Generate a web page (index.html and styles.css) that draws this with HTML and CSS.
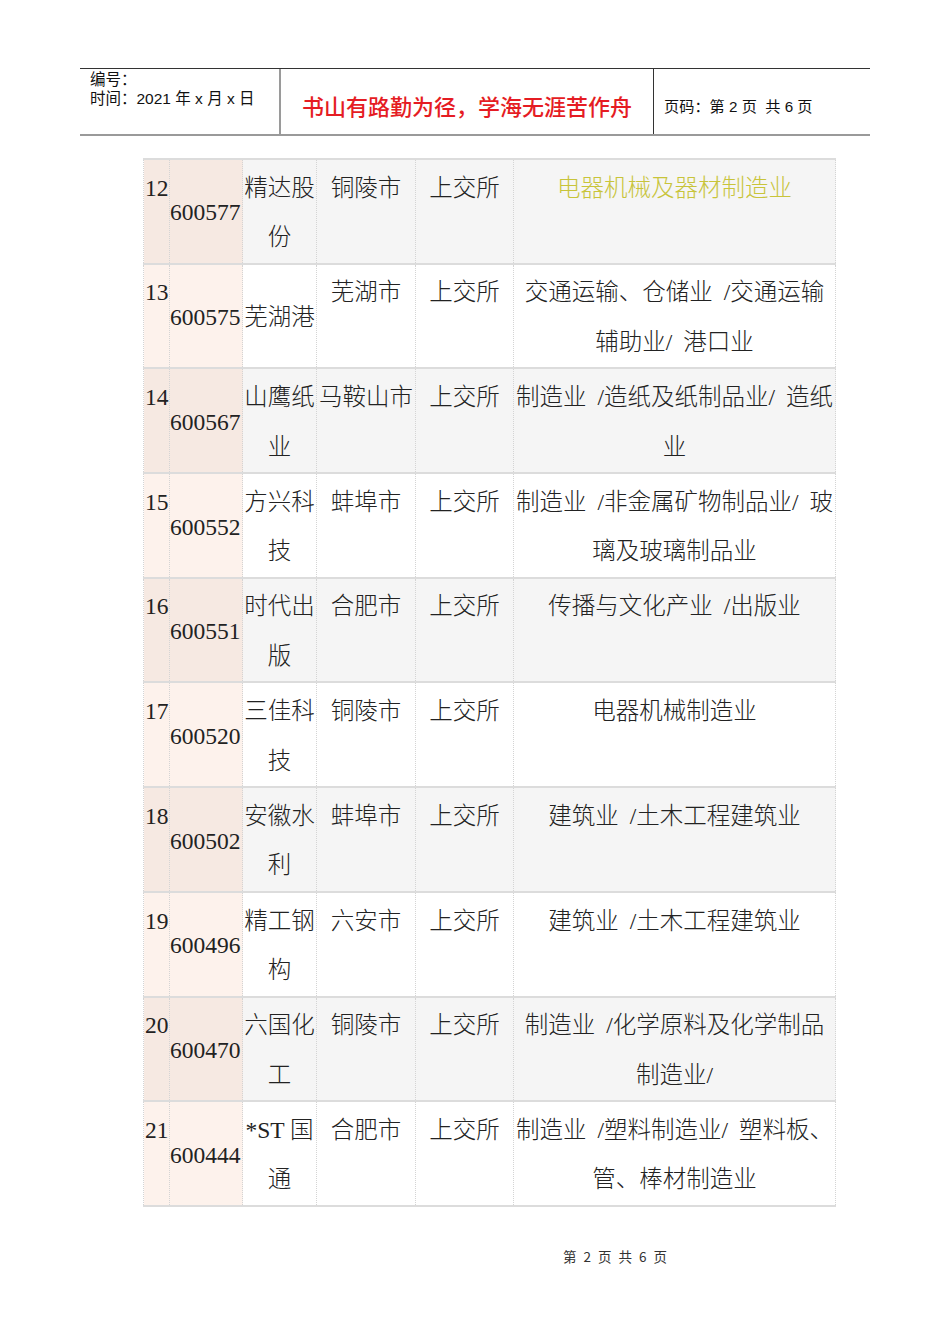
FILE: index.html
```html
<!DOCTYPE html>
<html lang="zh-CN">
<head>
<meta charset="utf-8">
<title>上市公司列表</title>
<link rel="stylesheet" href="styles.css">
</head>
<body>
<div class="page">
  <header class="doc-head">
    <div class="head-left">
      <div>编号：</div>
      <div>时间：2021 年 x 月 x 日</div>
    </div>
    <div class="head-mid">书山有路勤为径，学海无涯苦作舟</div>
    <div class="head-right">页码：第 2 页&nbsp; 共 6 页</div>
  </header>

  <table class="list">
    <colgroup>
      <col class="c-no"><col class="c-code"><col class="c-name"><col class="c-city"><col class="c-ex"><col class="c-ind">
    </colgroup>
    <tbody>
      <tr class="even"><td class="no">12</td><td class="code">600577</td><td class="name">精达股<br>份</td><td class="city">铜陵市</td><td class="ex">上交所</td><td class="ind hl">电器机械及器材制造业</td></tr>
      <tr class="odd"><td class="no">13</td><td class="code">600575</td><td class="name">芜湖港</td><td class="city">芜湖市</td><td class="ex">上交所</td><td class="ind">交通运输、仓储业 /交通运输<br>辅助业/ 港口业</td></tr>
      <tr class="even"><td class="no">14</td><td class="code">600567</td><td class="name">山鹰纸<br>业</td><td class="city">马鞍山市</td><td class="ex">上交所</td><td class="ind">制造业 /造纸及纸制品业/ 造纸<br>业</td></tr>
      <tr class="odd"><td class="no">15</td><td class="code">600552</td><td class="name">方兴科<br>技</td><td class="city">蚌埠市</td><td class="ex">上交所</td><td class="ind">制造业 /非金属矿物制品业/ 玻<br>璃及玻璃制品业</td></tr>
      <tr class="even"><td class="no">16</td><td class="code">600551</td><td class="name">时代出<br>版</td><td class="city">合肥市</td><td class="ex">上交所</td><td class="ind">传播与文化产业 /出版业</td></tr>
      <tr class="odd"><td class="no">17</td><td class="code">600520</td><td class="name">三佳科<br>技</td><td class="city">铜陵市</td><td class="ex">上交所</td><td class="ind">电器机械制造业</td></tr>
      <tr class="even"><td class="no">18</td><td class="code">600502</td><td class="name">安徽水<br>利</td><td class="city">蚌埠市</td><td class="ex">上交所</td><td class="ind">建筑业 /土木工程建筑业</td></tr>
      <tr class="odd"><td class="no">19</td><td class="code">600496</td><td class="name">精工钢<br>构</td><td class="city">六安市</td><td class="ex">上交所</td><td class="ind">建筑业 /土木工程建筑业</td></tr>
      <tr class="even"><td class="no">20</td><td class="code">600470</td><td class="name">六国化<br>工</td><td class="city">铜陵市</td><td class="ex">上交所</td><td class="ind">制造业 /化学原料及化学制品<br>制造业/</td></tr>
      <tr class="odd"><td class="no">21</td><td class="code">600444</td><td class="name">*ST 国<br>通</td><td class="city">合肥市</td><td class="ex">上交所</td><td class="ind">制造业 /塑料制造业/ 塑料板、<br>管、棒材制造业</td></tr>
    </tbody>
  </table>

  <footer class="doc-foot">第 2 页 共 6 页</footer>
</div>
</body>
</html>
```

FILE: styles.css
```css
html, body {
  margin: 0;
  padding: 0;
  background: #ffffff;
}

.page {
  width: 950px;
  padding-top: 68px;
}

/* ---------- header ---------- */
.doc-head {
  margin-left: 80px;
  width: 790px;
  height: 68px;
  box-sizing: border-box;
  border-top: 1px solid #333333;
  border-bottom: 2px solid #9a9a9a;
  display: flex;
  font-family: "Liberation Sans", "Noto Sans CJK SC", sans-serif;
  color: #111111;
}

.head-left {
  width: 201px;
  box-sizing: border-box;
  padding: 1px 0 0 10px;
  font-size: 15.5px;
  line-height: 19px;
  border-right: 2px solid #9a9a9a;
}

.head-mid {
  width: 373px;
  box-sizing: border-box;
  display: flex;
  align-items: center;
  justify-content: center;
  padding-top: 6px;
  font-size: 22px;
  font-weight: 500;
  color: #e51c23;
  border-right: 1px solid #333333;
  font-family: "Noto Sans CJK SC", sans-serif;
}

.head-right {
  flex: 1;
  display: flex;
  align-items: center;
  padding: 6px 0 0 10px;
  font-size: 15.2px;
}

/* ---------- table ---------- */
.list {
  margin: 22px 0 0 143px;
  width: 692px;
  table-layout: fixed;
  border-collapse: collapse;
  font-family: "Liberation Serif", "Noto Sans CJK SC", serif;
  font-size: 23.5px;
  font-weight: 300;
  line-height: 49.5px;
  color: #222222;
  border-top: 2px solid #dcdcdc;
}

.c-no { width: 26px; }
.c-code { width: 73px; }
.c-name { width: 74px; }
.c-city { width: 99px; }
.c-ex { width: 98px; }
.c-ind { width: 322px; }

.list tr {
  border-bottom: 2px solid #dcdcdc;
}

.list td {
  height: 102.7px;
  padding: 3.7px 0 0 0;
  box-sizing: border-box;
  border-left: 1px dotted #d4d4d4;
  border-right: 1px dotted #d4d4d4;
  vertical-align: top;
  text-align: center;
  white-space: nowrap;
  overflow: visible;
}

.list tr.even td { background: #f5f5f5; }
.list tr.odd td { background: #ffffff; }
.list tr.even td.no,
.list tr.even td.code { background: #f6e9e2; }
.list tr.odd td.no,
.list tr.odd td.code { background: #fdf2ec; }

.list td.no {
  text-align: left;
  padding-left: 1px;
}

.list td.code {
  text-align: left;
  padding-left: 0;
  vertical-align: middle;
}

.list td.name {
  vertical-align: middle;
}

.list td.ind {
  word-spacing: 5px;
}

.list td.ind.hl {
  color: #c8c43a;
}

/* ---------- footer ---------- */
.doc-foot {
  margin: 40px 0 0 563px;
  font-family: "Noto Sans CJK SC", sans-serif;
  font-size: 13.5px;
  line-height: 18px;
  color: #333333;
  word-spacing: 4px;
}
```
